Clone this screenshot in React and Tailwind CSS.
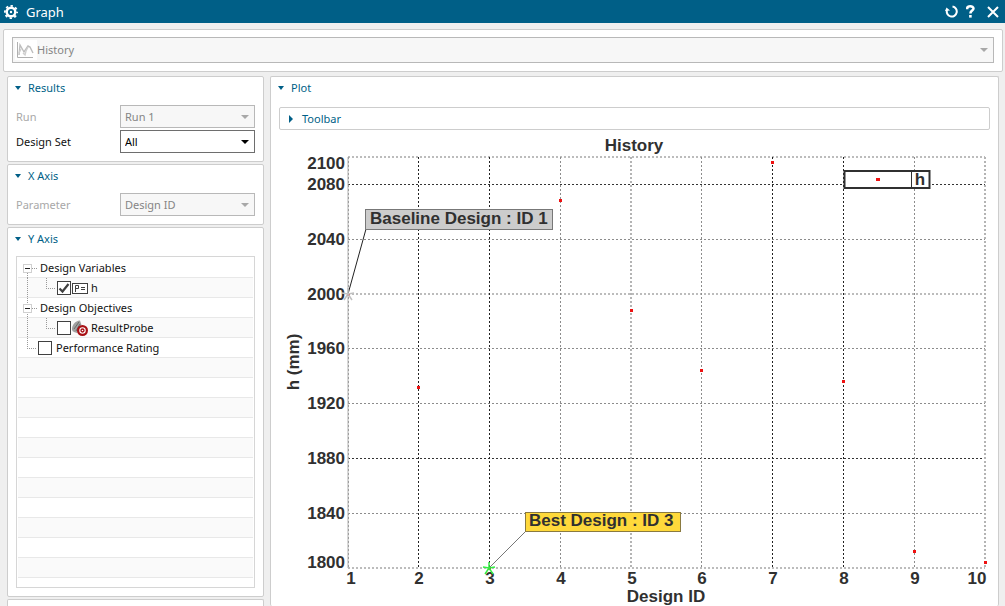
import React, { useState } from 'react';

const X_LINES = [
  { id: 1, color: '#8c8c8c' },
  { id: 2, color: '#222222' },
  { id: 3, color: '#222222' },
  { id: 4, color: '#8c8c8c' },
  { id: 5, color: '#b4b4b4', wide: true },
  { id: 6, color: '#8c8c8c' },
  { id: 7, color: '#222222' },
  { id: 8, color: '#222222' },
  { id: 9, color: '#8c8c8c' },
  { id: 10, color: '#b4b4b4', wide: true },
];

const Y_LINES = [
  { value: 2100, color: '#bcbcbc', wide: true },
  { value: 2080, color: '#333333' },
  { value: 2040, color: '#8c8c8c' },
  { value: 2000, color: '#bcbcbc', wide: true },
  { value: 1960, color: '#8c8c8c' },
  { value: 1920, color: '#8c8c8c' },
  { value: 1880, color: '#333333' },
  { value: 1840, color: '#8c8c8c' },
  { value: 1800, color: '#bcbcbc', wide: true },
];

const POINTS = [
  { id: 1, h: 2000 },
  { id: 2, h: 1932 },
  { id: 3, h: 1800 },
  { id: 4, h: 2068 },
  { id: 5, h: 1988 },
  { id: 6, h: 1944 },
  { id: 7, h: 2096 },
  { id: 8, h: 1936 },
  { id: 9, h: 1812 },
  { id: 10, h: 1804 },
];

const LEFT = 69;
const RIGHT = 706;
const TOP = 27;
const BOTTOM = 438;

const xPos = (id) => Math.floor(LEFT + ((id - 1) * (RIGHT - LEFT)) / 9);
const yPos = (h) => Math.floor(TOP + ((2100 - h) * (BOTTOM - TOP)) / 300);

function Star({ x, y, color }) {
  return (
    <path
      d={`M${x} ${y}V${y - 6}M${x} ${y}L${x - 6} ${y - 1}M${x} ${y}L${x + 6} ${y - 1}M${x} ${y}L${x - 4} ${y + 6}M${x} ${y}L${x + 4} ${y + 6}`}
      stroke={color}
      strokeWidth="1.5"
      fill="none"
    />
  );
}

function Chart() {
  return (
    <svg
      viewBox="0 0 711 476"
      className="block w-full font-['Liberation_Sans',Arial,sans-serif] text-[17px] font-bold"
      fill="#303030"
      role="img"
      aria-label="History"
    >
      <text x="355" y="21" textAnchor="middle">History</text>

      {Y_LINES.map((l) => (
        <line
          key={l.value}
          x1={LEFT}
          x2={RIGHT}
          y1={yPos(l.value) + (l.wide ? 0 : 0.5)}
          y2={yPos(l.value) + (l.wide ? 0 : 0.5)}
          stroke={l.color}
          strokeWidth={l.wide ? 2 : 1}
          strokeDasharray="2 2"
        />
      ))}
      {X_LINES.map((l) => (
        <line
          key={l.id}
          x1={xPos(l.id) + (l.wide ? 0 : 0.5)}
          x2={xPos(l.id) + (l.wide ? 0 : 0.5)}
          y1={TOP}
          y2={BOTTOM}
          stroke={l.color}
          strokeWidth={l.wide ? 2 : 1}
          strokeDasharray="2 2"
        />
      ))}
      <line x1="69" x2="69" y1={TOP} y2={BOTTOM} stroke="#b0b0b0" strokeWidth="1" />

      {Y_LINES.map((l) => {
        let y = yPos(l.value) + 6;
        if (l.value === 2100) y = 39;
        if (l.value === 1800) y = 438;
        return (
          <text key={l.value} x="66" y={y} textAnchor="end">{l.value}</text>
        );
      })}
      {X_LINES.map((l) => {
        let x = xPos(l.id) + 1;
        if (l.id === 1) x = 72;
        if (l.id === 10) x = 698;
        return (
          <text key={l.id} x={x} y="454" textAnchor="middle">{l.id}</text>
        );
      })}
      <text x="387" y="472" textAnchor="middle">Design ID</text>
      <text transform="translate(20 232) rotate(-90)" textAnchor="middle">h (mm)</text>

      {POINTS.map((p) => (
        <rect key={p.id} x={xPos(p.id) - 1} y={yPos(p.h) - 1} width="3" height="3" fill="#ee1111" />
      ))}

      <line x1="69" y1="164" x2="87" y2="99" stroke="#222222" />
      <Star x={69} y={164} color="#c0c0c0" />
      <rect x="86.5" y="79.5" width="187" height="20" fill="#cccccc" stroke="#777777" />
      <text x="91" y="94">Baseline Design : ID 1</text>

      <line x1="210" y1="438" x2="246" y2="402" stroke="#777777" />
      <Star x={210} y={438} color="#33ee44" />
      <rect x="246.5" y="382.5" width="155" height="19" fill="#ffd93b" stroke="#8a7a40" />
      <text x="250" y="396">Best Design : ID 3</text>

      <rect x="565.5" y="41" width="85" height="17" fill="#ffffff" stroke="#303030" strokeWidth="2" />
      <line x1="632.5" x2="632.5" y1="41" y2="58" stroke="#303030" />
      <rect x="597" y="48" width="4" height="3" fill="#ee1111" />
      <text x="641" y="55" textAnchor="middle">h</text>
    </svg>
  );
}

function Panel({ title, children, className = '' }) {
  return (
    <section className={`rounded-[2px] border border-[#cdcdcd] bg-white ${className}`}>
      <h2>
        <button type="button" className="flex h-[22px] items-center gap-1.5 pl-1.5 text-[#005f87]">
          <svg width="8" height="5" viewBox="0 0 8 5" fill="currentColor"><path d="M1 0H7L4 4Z" /></svg>
          {title}
        </button>
      </h2>
      {children}
    </section>
  );
}

function SelectBox({ id, value, disabled }) {
  return (
    <div className="grid w-[135px] items-center">
      <select
        id={id}
        disabled={disabled}
        className="col-start-1 row-start-1 h-[23px] w-full appearance-none border border-[#6e6e6e] bg-white pl-1 text-black disabled:border-[#b8b8b8] disabled:bg-[#f7f7f7] disabled:text-[#858585] disabled:opacity-100"
      >
        <option>{value}</option>
      </select>
      <svg
        width="8"
        height="4"
        viewBox="0 0 8 4"
        className={`pointer-events-none col-start-1 row-start-1 mr-1.5 justify-self-end ${disabled ? 'fill-[#a8a8a8]' : 'fill-black'}`}
      >
        <path d="M0 0H8L4 4Z" />
      </svg>
    </div>
  );
}

function Check({ id, checked, onChange }) {
  return (
    <span className="grid size-3.5">
      <input
        id={id}
        type="checkbox"
        checked={checked}
        onChange={onChange}
        className="peer col-start-1 row-start-1 size-3.5 appearance-none border border-[#404040] bg-white"
      />
      <svg viewBox="0 0 14 14" className="pointer-events-none invisible col-start-1 row-start-1 size-3.5 peer-checked:visible">
        <path d="M2.5 7.5L5.5 10.5L11.5 3" fill="none" stroke="#404040" strokeWidth="2.2" />
      </svg>
    </span>
  );
}

function GroupRow({ title, first }) {
  return (
    <>
      <button type="button" aria-label={`Collapse ${title}`}>
        <svg width="22" height="20" viewBox="0 0 22 20" fill="none" className="block">
          <path d={first ? 'M9.5 15V20' : 'M9.5 0V20'} stroke="#999999" strokeDasharray="1 1" />
          <path d="M14 10.5H19" stroke="#999999" strokeDasharray="1 1" />
          <rect x="5.5" y="6.5" width="8" height="8" fill="#ffffff" stroke="#d0d0d0" />
          <path d="M7 10.5H12" stroke="#222222" />
        </svg>
      </button>
      <span>{title}</span>
    </>
  );
}

function ChildLines() {
  return (
    <svg width="39" height="20" viewBox="0 0 39 20" fill="none" stroke="#999999" strokeDasharray="1 1">
      <path d="M9.5 0V20M28.5 0V10M28 10.5H38" />
    </svg>
  );
}

function App() {
  const [checks, setChecks] = useState({ h: true, probe: false, rating: false });
  const toggle = (name) => setChecks({ ...checks, [name]: !checks[name] });

  const rowClass = 'flex h-5 items-center odd:bg-white even:bg-[#fafafa] shadow-[inset_0_-1px_#e8e8e8]';

  return (
    <div className="flex h-screen flex-col overflow-hidden bg-[#efefef] font-['Noto_Sans','Open_Sans',sans-serif] text-[11px] leading-4 text-[#111111]">
      <header className="flex h-[23px] shrink-0 items-center bg-[#005f87] pl-1 pr-1.5 text-white">
        <svg width="14" height="14" viewBox="0 0 14 14" fill="none" stroke="currentColor">
          <circle cx="7" cy="7" r="4.3" strokeWidth="2.4" />
          <circle cx="7" cy="7" r="6.1" strokeWidth="1.8" strokeDasharray="2.4 2.39" strokeDashoffset="1.2" />
          <circle cx="7" cy="7" r="1.2" fill="currentColor" stroke="none" />
        </svg>
        <h1 className="ml-2 text-[13px]">Graph</h1>
        <div className="ml-auto flex items-center gap-2">
          <button type="button" aria-label="Reset">
            <svg width="13" height="13" viewBox="0 0 13 13" fill="none" stroke="currentColor" className="block">
              <path d="M7.5 1.6A5 5 0 1 1 2 5" strokeWidth="2" />
              <path d="M0 6L1.5 2.5L5 5.5Z" fill="currentColor" stroke="none" />
            </svg>
          </button>
          <button type="button" aria-label="Help">
            <svg width="9" height="13" viewBox="0 0 9 13" fill="none" stroke="currentColor" className="block">
              <path d="M1.2 4.2V3.5C1.2 0.6 7.5 0.6 7.5 3.5C7.5 5.6 4.4 5.6 4.4 8.5" strokeWidth="2.5" />
              <path d="M4.4 10V12.6" strokeWidth="2.6" />
            </svg>
          </button>
          <button type="button" aria-label="Close" className="ml-1">
            <svg width="12" height="12" viewBox="0 0 12 12" stroke="currentColor" className="block">
              <path d="M1 1L11 11M11 1L1 11" strokeWidth="2" />
            </svg>
          </button>
        </div>
      </header>

      <div className="ml-[3px] mr-0.5 mt-1.5 shrink-0 rounded-[2px] border border-[#cdcdcd] bg-white px-2 pb-2 pt-[7px]">
        <div className="grid items-center">
          <select
            disabled
            aria-label="Graph type"
            className="col-start-1 row-start-1 h-[26px] w-full appearance-none border border-[#b8b8b8] bg-[#f7f7f7] pl-6 text-[#858585] disabled:opacity-100"
          >
            <option>History</option>
          </select>
          <svg width="22" height="20" viewBox="0 0 22 20" fill="none" className="pointer-events-none col-start-1 row-start-1 ml-[3px]">
            <rect width="22" height="20" fill="#ffffff" />
            <path d="M2.5 2V17.5H18" stroke="#b0b0b0" />
            <path d="M4 15L5 5L9 12L13 6L15 7L18 13" stroke="#bdbdbd" strokeWidth="1.4" />
            <path d="M4 13L6 9M8 13L10 15L11 11L13 7" stroke="#cfcfcf" strokeWidth="1.4" />
          </svg>
          <svg width="8" height="4" viewBox="0 0 8 4" className="pointer-events-none col-start-1 row-start-1 mr-1.5 justify-self-end fill-[#a8a8a8]">
            <path d="M0 0H8L4 4Z" />
          </svg>
        </div>
      </div>

      <main className="mt-1 flex min-h-0 flex-1 gap-1.5 pl-[7px] pr-1.5">
        <div className="flex w-[257px] shrink-0 flex-col gap-0.5">
          <Panel title="Results" className="shrink-0">
            <div className="flex flex-col gap-0.5 px-2 pb-2 pt-1.5">
              <div className="flex items-center justify-between">
                <label htmlFor="run" className="text-[#a8a8a8]">Run</label>
                <SelectBox id="run" value="Run 1" disabled />
              </div>
              <div className="flex items-center justify-between">
                <label htmlFor="designSet">Design Set</label>
                <SelectBox id="designSet" value="All" />
              </div>
            </div>
          </Panel>

          <Panel title="X Axis" className="shrink-0">
            <div className="flex items-center justify-between px-2 pb-2 pt-1.5">
              <label htmlFor="parameter" className="text-[#a8a8a8]">Parameter</label>
              <SelectBox id="parameter" value="Design ID" disabled />
            </div>
          </Panel>

          <Panel title="Y Axis" className="shrink-0">
            <div className="px-2 pb-2 pt-1.5">
              <ul className="border border-[#d6d6d6] px-px pb-[9px] pt-px">
                <li className={rowClass}>
                  <GroupRow title="Design Variables" first />
                </li>
                <li className={rowClass}>
                  <ChildLines />
                  <Check id="h" checked={checks.h} onChange={() => toggle('h')} />
                  <label htmlFor="h" className="flex items-center gap-[3px] pl-px">
                    <svg width="16" height="11" viewBox="0 0 16 11" fill="none" stroke="#404040">
                      <rect x="0.5" y="0.5" width="15" height="10" fill="#ffffff" />
                      <path d="M3.5 9V2.5H6.5V5.5H3.5M9 4.5H13M9 6.5H13" />
                    </svg>
                    h
                  </label>
                </li>
                <li className={rowClass}>
                  <GroupRow title="Design Objectives" />
                </li>
                <li className={rowClass}>
                  <ChildLines />
                  <Check id="probe" checked={checks.probe} onChange={() => toggle('probe')} />
                  <label htmlFor="probe" className="flex items-center gap-[3px] pl-px">
                    <svg width="16" height="16" viewBox="0 0 16 16">
                      <path d="M0 9C0 5 3 1 8 0.5L9.5 5L5 13C1 12 0 11 0 9Z" fill="#a0a0a0" />
                      <path d="M2 9L7 2M4 11L8 4" stroke="#6a6a6a" fill="none" />
                      <circle cx="10.5" cy="10.5" r="5.5" fill="#a80f14" />
                      <circle cx="10.5" cy="10.5" r="2.7" fill="none" stroke="#ffffff" strokeWidth="1.1" />
                      <circle cx="10.5" cy="10.5" r="0.8" fill="#ffffff" />
                    </svg>
                    ResultProbe
                  </label>
                </li>
                <li className={rowClass}>
                  <svg width="20" height="20" viewBox="0 0 20 20" fill="none" stroke="#999999" strokeDasharray="1 1">
                    <path d="M9.5 0V10M9 10.5H19" />
                  </svg>
                  <Check id="rating" checked={checks.rating} onChange={() => toggle('rating')} />
                  <label htmlFor="rating" className="pl-1">Performance Rating</label>
                </li>
                {Array.from({ length: 11 }).map((_, i) => (
                  <li key={i} className={rowClass} aria-hidden="true" />
                ))}
              </ul>
            </div>
          </Panel>

          <div className="flex-1 rounded-t-[2px] border border-b-0 border-[#cdcdcd] bg-white" />
        </div>

        <Panel title="Plot" className="min-w-0 flex-1 border-b-0">
          <div className="px-2 pt-2">
            <button type="button" className="flex h-[23px] w-full items-center gap-[9px] rounded-[2px] border border-[#cdcdcd] pl-[9px] text-[#005f87]">
              <svg width="4" height="8" viewBox="0 0 4 8" fill="currentColor"><path d="M0 0L4 4L0 8Z" /></svg>
              Toolbar
            </button>
            <Chart />
          </div>
        </Panel>
      </main>
    </div>
  );
}

export default App;
